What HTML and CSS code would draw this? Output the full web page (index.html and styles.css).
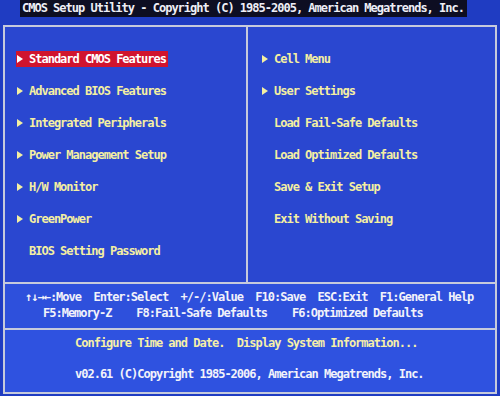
FILE: index.html
```html
<!doctype html>
<html>
<head>
    <link rel="stylesheet" href="styles.css">
    <title>CMOS Setup Utility</title>
</head>
<body>
    <div class="title"><span>CMOS Setup Utility - Copyright (C) 1985-2005, American Megatrends, Inc.</span></div>
    <div class="frame">
        <div class="menu">
            <ul class="col">
                <li class="item on"><i class="arrow"></i>Standard CMOS Features</li>
                <li class="item"><i class="arrow"></i>Advanced BIOS Features</li>
                <li class="item"><i class="arrow"></i>Integrated Peripherals</li>
                <li class="item"><i class="arrow"></i>Power Management Setup</li>
                <li class="item"><i class="arrow"></i>H/W Monitor</li>
                <li class="item"><i class="arrow"></i>GreenPower</li>
                <li class="item"><i class="arrow none"></i>BIOS Setting Password</li>
            </ul>
            <ul class="col right">
                <li class="item"><i class="arrow"></i>Cell Menu</li>
                <li class="item"><i class="arrow"></i>User Settings</li>
                <li class="item"><i class="arrow none"></i>Load Fail-Safe Defaults</li>
                <li class="item"><i class="arrow none"></i>Load Optimized Defaults</li>
                <li class="item"><i class="arrow none"></i>Save &amp; Exit Setup</li>
                <li class="item"><i class="arrow none"></i>Exit Without Saving</li>
            </ul>
        </div>
        <div class="keys">
            <div class="line k1">↑↓→←:Move  Enter:Select  +/-/:Value  F10:Save  ESC:Exit  F1:General Help</div>
            <div class="line k2">F5:Memory-Z    F8:Fail-Safe Defaults    F6:Optimized Defaults</div>
        </div>
        <div class="info">
            <div class="line msg">Configure Time and Date.  Display System Information...</div>
            <div class="line copy">v02.61 (C)Copyright 1985-2006, American Megatrends, Inc.</div>
        </div>
    </div>
</body>
</html>
```

FILE: styles.css
```css
html, body {
    height: 396px;
    overflow: hidden;
}
body {
    margin: 0;
    background-color: #1f3cc2;
    font-family: "DejaVu Sans Mono", monospace;
    font-weight: bold;
    font-size: 12px;
    letter-spacing: -1px;
}
.title {
    height: 17px;
    line-height: 17px;
    padding-left: 20px;
}
.title span {
    display: inline-block;
    height: 17px;
    padding: 0 3px 0 2px;
    background-color: #0d0e22;
    color: #eeeef6;
}
.frame {
    margin: 8px 3px 0;
    height: 369px;
    box-sizing: border-box;
    border: 2px solid #c6cadc;
    display: flex;
    flex-direction: column;
}
.menu {
    display: grid;
    grid-template-columns: 241px 1fr;
    height: 255px;
    border-bottom: 2px solid #c6cadc;
    background-color: #2a47d0;
}
.col {
    list-style: none;
    margin: 0;
    padding: 24px 0 0 11px;
    display: flex;
    flex-direction: column;
    gap: 16px;
}
.col.right {
    border-left: 2px solid #c6cadc;
    padding-left: 13px;
}
.item {
    display: flex;
    align-items: center;
    align-self: flex-start;
    height: 16px;
    gap: 6px;
    padding: 0 2px 0 1px;
    color: #f4efa2;
}
.arrow {
    width: 0;
    height: 0;
    border-left: 6px solid currentColor;
    border-top: 4px solid transparent;
    border-bottom: 4px solid transparent;
}
.arrow.none {
    border-left-color: transparent;
}
.on {
    background-color: #d0142e;
    color: #ffffff;
}
.line {
    white-space: pre;
    line-height: 16px;
}
.keys {
    height: 46px;
    box-sizing: border-box;
    padding-top: 5px;
    border-bottom: 2px solid #c6cadc;
    background-color: #2e50dc;
    color: #f2f2fa;
}
.k1 {
    padding-left: 20px;
}
.k2 {
    padding-left: 38px;
}
.info {
    flex: 1;
    padding: 5px 0 0 70px;
    background-color: #2f52e0;
}
.msg {
    color: #f6efa8;
}
.copy {
    margin-top: 15px;
    color: #f2f2fa;
}
```
